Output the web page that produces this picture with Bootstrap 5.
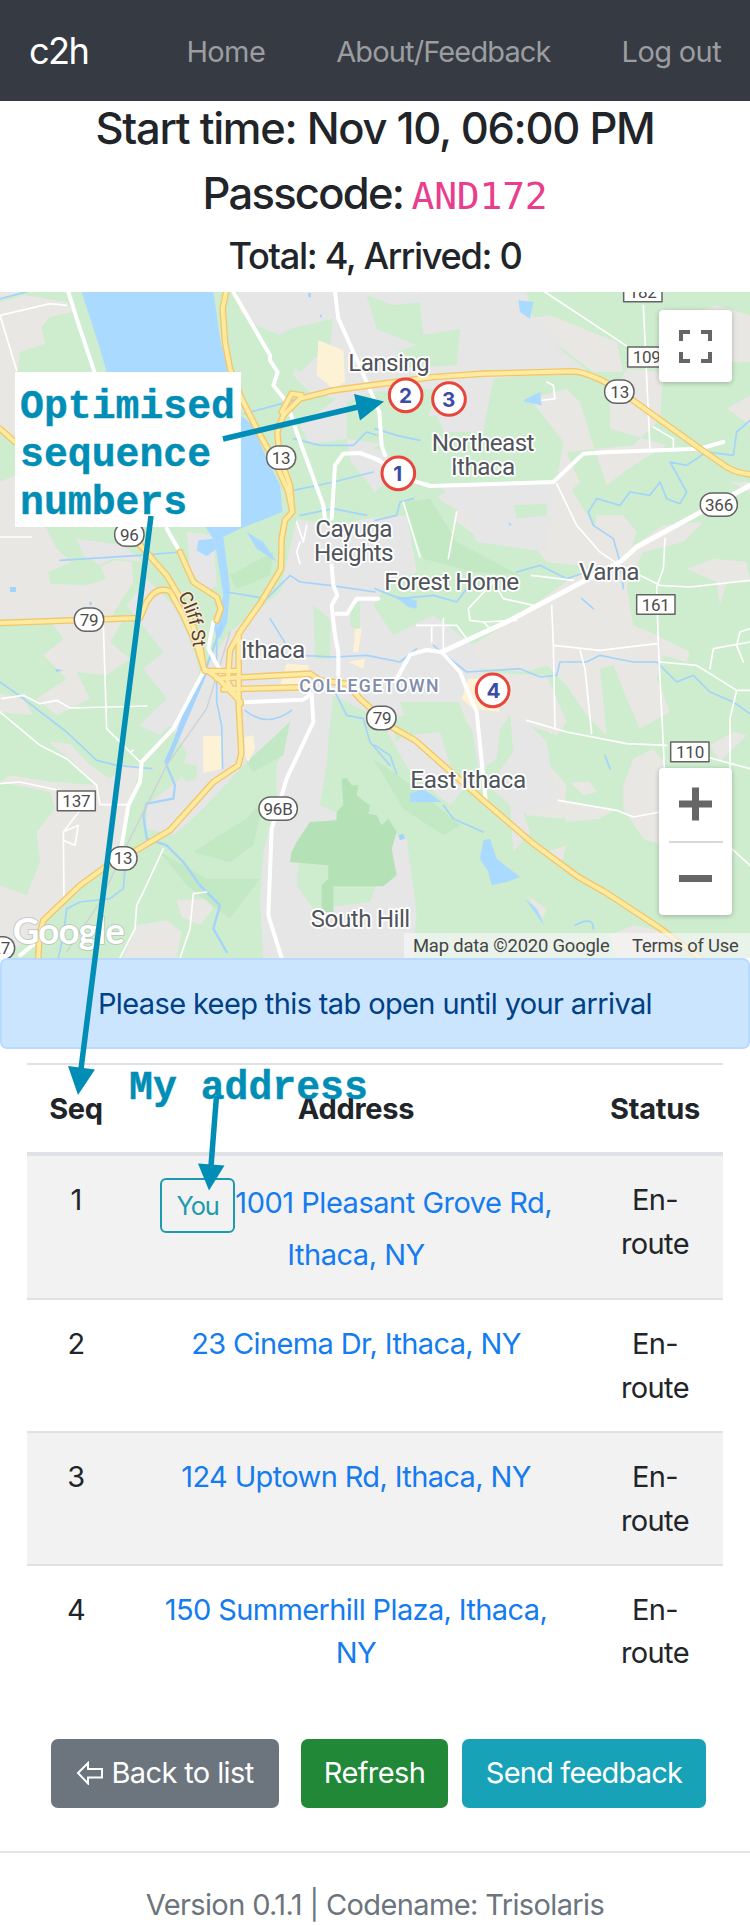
<!DOCTYPE html>
<html lang="en">
<head>
<meta charset="utf-8">
<meta name="viewport" content="width=device-width, initial-scale=1">
<title>c2h</title>
<link href="https://cdn.jsdelivr.net/npm/bootstrap@5.3.0/dist/css/bootstrap.min.css" rel="stylesheet">
<style>
html{font-size:29px}
body{font-family:Inter,"Noto Sans",sans-serif;font-size:29px;line-height:1.5;letter-spacing:-.0215em;color:#212529;background:#fff;width:750px;height:1925px;overflow:hidden}
.topbar{background:#363a42;height:101px;padding:2px 29px 0}
.topbar a{color:#9b9da0;text-decoration:none}
.topbar .logo{color:#fff;font-size:36.2px;letter-spacing:-.045em}
.nav-links{gap:71px}
.trip-head{height:191px;padding-top:1px}
.trip-head h4{font-size:43.5px;line-height:52.2px;margin-bottom:13px;letter-spacing:-.0295em;font-weight:500}
.trip-head h4.pass{letter-spacing:-.04em;margin-bottom:16px}
.trip-head h5{font-size:36.2px;line-height:43.5px;margin-bottom:0;letter-spacing:-.037em;font-weight:500}
.trip-head code{font-family:"DejaVu Sans Mono",monospace;font-size:38px;line-height:1;color:#e83e8c;letter-spacing:-.006em;margin-left:-1.5px}
.map-box{height:666px;overflow:hidden}
.map-box svg{display:block}
.map-btn{background:#fff;border-radius:4px;box-shadow:0 1px 5px rgba(0,0,0,.25);width:73px}
.map-fs{top:18px;right:18px;height:72px}
.map-zoom{top:476px;right:18px;height:147px}
.map-zoom hr{width:54px;margin:0;border-top:2px solid #d9d9d9;opacity:1}
.map-legal{font:18.4px Roboto,sans-serif;letter-spacing:-.01em;color:#444;height:25px;right:0;bottom:0;background:rgba(245,245,245,.72)}
.notice{background:#cce5ff;border:2px solid #b8daff;color:#004085;border-radius:7px;height:91px;padding:0;margin:0 0 14px}
.stops{width:696px;margin:0 auto;table-layout:fixed;text-align:center}
.stops th,.stops td{padding:22px 21.7px 21.7px;border:0;border-top:2px solid #dee2e6;vertical-align:top}
.stops th{height:89px;letter-spacing:-.01em;border-bottom:4px solid #dee2e6}
.stops tbody tr:first-child td{border-top:0}
.stops tbody tr:nth-child(odd) td{background:#f2f2f2}
.stops a{color:#147cf0;text-decoration:none}
.stops .you{color:#1d9bae;border:2px solid #1d9bae;border-radius:6px;font-size:25.4px;line-height:1.5;padding:6.5px 14.5px;letter-spacing:-.04em}
.stops .you + a{letter-spacing:-.0165em}
.actions{padding:42px 44px 0 51px}
.actions .btn{border:2px solid transparent;border-radius:7px;height:69px;padding:0 23px;font-size:29px;color:#fff;display:flex;align-items:center;white-space:nowrap;justify-content:center}
.b-back{background:#6c757d;width:228px}.b-ref{background:#218838;width:147px;margin-left:22px}.b-send{background:#17a2b8;width:244px;margin-left:14px}
.foot{margin-top:43px;border-top:2px solid #e5e5e5;padding-top:30px;color:#6c757d}
.note{font:bold 39.8px/48px "Liberation Mono",monospace;color:#008eb6;letter-spacing:0;-webkit-text-stroke:.4px #008eb6;white-space:pre}
.note-box{left:15px;top:372px;width:226px;height:155px;padding:12px 0 0 5px;background:#fff}
.note-addr{left:129px;top:1065px}
.arrows{left:0;top:0;pointer-events:none}
.lbl text{font-family:Roboto,sans-serif;font-size:73px;fill:#51555b;stroke:#fff;stroke-width:11px;stroke-linejoin:round;paint-order:stroke}
.shield text{font-family:Roboto,sans-serif;font-size:51px;fill:#4c4c4c;text-anchor:middle}
.pin text{font-family:Inter,sans-serif;font-weight:700;font-size:62px;fill:#3c4ba6;text-anchor:middle}
</style>
<script src="https://cdn.jsdelivr.net/npm/bootstrap@5.3.0/dist/js/bootstrap.bundle.min.js"></script>
</head>
<body class="position-relative">
<nav class="topbar d-flex align-items-center justify-content-between">
  <a class="logo" href="#">c2h</a>
  <div class="nav-links d-flex"><a href="#">Home</a><a href="#" style="letter-spacing:-.03em">About/Feedback</a><a href="#">Log out</a></div>
</nav>

<header class="trip-head text-center">
  <h4>Start time: Nov 10, 06:00 PM</h4>
  <h4 class="pass">Passcode: <code>AND172</code></h4>
  <h5>Total: 4, Arrived: 0</h5>
</header>

<section class="map-box position-relative">
<svg width="750" height="666" viewBox="0 20 2250 1998" fill="none" stroke-linejoin="round" stroke-linecap="round">
  <rect y="20" width="2250" height="1998" fill="#ceecce"/>
  <!-- rural land -->
  <g fill="#e9e7e3">
    <path d="M0 50L75 30 200 50 218 80 150 95 125 125 135 175 60 200 50 290 0 290zM0 20H60L0 40z"/>
    <path d="M0 120L45 260V470L0 430zM0 590L45 570 140 730 170 790 215 830 145 860 150 895 260 900 320 880 300 845 345 825 395 830 400 890 330 1000 0 1000z"/>
    <path d="M150 1005H370L330 1070 390 1120 320 1170 230 1160 270 1240 170 1290 110 1240 200 1180 130 1110 190 1060z"/>
    <path d="M0 1225L70 1240 100 1290 0 1280zM145 1370L210 1375 270 1440 330 1480 370 1440 420 1440 360 1700 320 1740 240 1800 130 1905 90 1960 0 2018V1800L80 1830 120 1730 110 1640 165 1570 150 1520 0 1490 30 1470 160 1490 290 1500 210 1420z"/>
    <path d="M530 1845L620 1840 640 1870 600 1920 545 1895zM370 2018L410 1920 500 1905 545 1940 530 2018z"/>
    <path d="M1590 340L1700 310 1740 350 1780 480 1820 600 1900 540 2000 480 1830 430 1830 340 1880 250 1990 260 1980 400 1900 480 1700 500 1740 590 1710 620 1670 590 1690 470z"/>
    <path d="M1570 100L1650 90 1850 170 1870 260 1780 260zM1980 70L2090 80 2150 60 2250 90V230L2180 230 2080 210 2040 120zM2180 370L2250 330V420zM2190 590L2250 590V620z"/>
    <path d="M1400 610L1700 590 1830 800 1820 850 1640 830 1600 780 1450 770 1360 700zM1790 690L1870 690 1910 740 1890 800 1850 860 1780 760z"/>
    <path d="M1740 860L1860 810 1990 720 2110 710 2050 770 1930 800 1880 900 1900 1020 1970 1050 2070 1100 2060 1130 1990 1110 1970 1180 2010 1280 1920 1330 1880 1240 1840 1140 1800 1150 1820 1350 1760 1290 1700 1200 1640 1140 1580 1160 1450 1150 1360 1110 1500 1030z"/>
    <path d="M2060 850L2140 820 2240 830 2250 890 2180 890 2160 960 2150 890zM1320 1110L1400 1160 1640 1170 1700 1310 1670 1350 1560 1310 1640 1430 1700 1500 1690 1600 1580 1590 1400 1310zM1710 1490L1770 1490 1790 1520 1750 1530zM1670 1540L1840 1575 1800 1600 1700 1610zM1900 1420L1960 1390 1990 1430 1985 1680 1930 1660 1870 1570 1870 1500zM2130 1380L2200 1340 2240 1350 2160 1430zM1640 1700L1700 1680 1680 1750zM1580 1830L1640 1870 1630 1900zM1830 1950L1900 1920 2000 1940 2040 2018H1850z"/>
  </g>
  <!-- built-up land -->
  <g fill="#e6e6e7">
    <path d="M715 20H1580L1600 100 1690 200 1760 255 1480 280 1450 440 1320 440 1280 400 1320 310 1120 320 1040 350 1040 460 1170 480 1160 590 1125 620 1030 500 960 590 930 480 900 420 1010 340 930 320 880 270 900 170 840 150 770 120 720 80z"/>
    <path d="M1200 600L1640 600 1660 640 1640 800 1430 770 1400 690 1330 650 1290 610z"/>
    <path d="M890 700L990 720 1100 700 1220 690 1250 860 1160 900 1120 960 1180 1050 1300 990 1420 1080 1460 1200 1380 1250 1200 1250 1230 1350 1320 1340 1350 1440 1400 1500 1350 1560 1230 1460 1140 1300 1000 1230 990 1320 980 1440 960 1560 1030 1590 920 1640 900 1700 890 1800 940 1870 1110 1850 1130 1800 1180 1640 1220 1660 1250 1880 1240 2018H790L780 1850 790 1700 830 1540 830 1440 870 1310 810 1370 730 1440 600 1580 520 1650 440 1630 440 1560 540 1480 560 1400 500 1300 600 1170 690 1040 840 920z"/>
    <path d="M560 740L640 750 650 900 620 920 570 850zM230 760L370 780 430 830 340 820 300 840 250 810zM380 960L440 880 520 960 560 1040 600 1150 560 1270 480 1350 420 1320 500 1240 430 1150 490 1100z"/>
    <path d="M1410 1300L1580 1310 1640 1370 1670 1560 1570 1580 1590 1640 1540 1700 1530 1560 1440 1480z"/>
  </g>
  <!-- green patches over town -->
  <g fill="#ceecce">
    <path d="M1100 30L1180 60 1260 50 1270 150 1380 130 1370 240 1200 250 1190 200 1250 180 1130 130zM870 130L1000 100 990 180 900 260 830 220 790 180zM900 480L1040 460 1050 520 1040 700 1240 560 1340 620 1200 680 1000 720 950 700z"/>
    <path d="M1250 400L1310 390 1340 460 1180 510 1120 490zM1540 660L1640 655 1640 690 1550 700zM690 840L840 840 800 920 700 920zM720 740L830 700 820 850 720 830zM940 960L990 1000 990 1120 945 1120zM1050 960L1080 950 1080 1040 1050 1020z"/>
    <path d="M1500 1330L1530 1290 1540 1400 1460 1510 1450 1450 1490 1420zM1170 1300L1370 1250 1360 1280 1240 1320 1190 1370z"/>
    <path d="M500 1430L590 1440 590 1480 560 1490z"/>
  </g>
  <g fill="#c3e8c4"><path d="M690 870L820 800 810 870 710 910zM1210 650L1290 640 1370 770 1560 870 1420 860 1270 820zM870 1310L850 1410 760 1460 740 1430zM1120 1420L1250 1510 1380 1620 1330 1650 1210 1570zM480 1700L620 1780 780 1780 690 1900 560 1800zM740 1600L790 1540 760 1680 690 1730 580 1700z"/></g>
  <path fill="#b4e1b5" d="M1025 1480L1040 1478 1055 1500 1075 1500 1070 1530 1095 1550 1110 1560 1105 1585 1130 1590 1145 1620 1165 1600 1190 1640 1175 1690 1190 1770 1150 1803H1000V1880H965V1800L985 1780 985 1740 870 1730 875 1700 890 1670 930 1610 1010 1605 1010 1580 1030 1560zM1125 1655L1160 1670 1145 1700 1175 1700V1770H1100z"/>
  <!-- commercial blocks -->
  <path fill="#fdf2d6" d="M955 165L1030 195 1035 290 1000 310 950 270zM610 1352H665V1450L610 1463zM735 1355L760 1350 765 1390 745 1430 733 1410zM860 1135L925 1140 930 1230 840 1200zM1065 1030H1085L1075 1100H1060zM1045 1130L1095 1120 1090 1150zM1405 1180H1460L1500 1280 1420 1270 1385 1240z"/>
  <!-- water -->
  <g fill="#aadaff">
    <path d="M245 20H640L662 170 690 270 720 345V390L760 420 800 520 840 600 847 680 720 730 670 755 690 910 682 1010 660 1060 640 1030 670 930 645 770 620 730 560 600 320 260 300 190z"/>
    <path d="M595 765L640 760 650 790 620 813 590 795zM1555 45L1600 50 1590 100 1560 80zM1570 345L1620 320 1625 360 1575 350zM1180 930L1250 945 1250 970 1225 965zM1230 1525L1270 1510 1325 1550 1230 1550zM1450 1665L1470 1660 1490 1720 1560 1775 1520 1790 1475 1800 1465 1760 1440 1720zM1575 1840L1610 1870 1635 1925zM740 740L790 770 830 830 770 790z"/>
  </g>
  <g stroke="#a4d4fb" stroke-width="5">
    <path d="M665 1020L610 1170 550 1290 500 1440 525 1500 520 1540 440 1555 430 1590 440 1660 500 1680 550 1730 600 1800 660 1860 640 1930 680 2000" stroke-width="7"/>
    <path d="M500 1430L620 1150" stroke-width="14"/><path d="M650 1030L650 1250 665 1320 668 1450M735 1275Q800 1330 875 1275M0 1190L70 1240 200 1340 290 1425 350 1440 455 1450M375 1750L370 1810 330 1840 240 1850 200 1870 190 1950 175 2018M680 920L800 940 870 870 900 890 990 900 1125 920M810 1000L860 1080M180 825L420 810 540 800M735 385L900 340M880 460L960 480 1060 480 1100 440 1130 450M880 615L1000 590 1120 560M900 690L1000 670 1100 690M900 1110L1000 1115 1100 1110 1200 1130 1250 1090M1000 1210L1040 1290 1090 1300 1110 1370 1170 1440M1125 705L1190 690 1200 650 1240 640M1125 430L1190 450 1260 465M1125 910L1200 940 1300 930 1370 950 1400 910M1550 860L1620 840 1700 880 1760 860M1300 1080L1400 1160 1560 1150 1620 1175 1670 1170 1680 1130 1760 1130 1800 1110 1900 1130 1970 1130 2030 1190 2080 1170 2130 1220 2200 1250 2250 1285M1870 910L1860 830 1840 760 1780 720 1765 680 1790 640 1860 660 1890 620 1950 630 1980 590 2000 640 2040 655 2060 620 2010 530 2060 540 2120 500 2200 510 2210 440 2250 405M1330 1560L1360 1600 1450 1640M1125 1380L1170 1410 1190 1465M1745 940L1780 970M1815 1410L1830 1450M1725 1920Q1780 1890 1780 1930M0 40L80 20"/>
  </g>
  <g fill="#a4d4fb"><path d="M30 905H48V920H30zM165 1150L190 1155 170 1160zM268 950H275V960H268zM1195 1650L1210 1645 1215 1660 1200 1665zM1525 710L1535 718 1528 722zM960 88H966V96H960zM925 22H933V36H925z"/></g>
  <path stroke="#d0d0d2" stroke-width="4" d="M690 1040L620 1270 500 1440 430 1580 370 1700 300 1850 200 2000"/>
  <!-- minor roads -->
  <g stroke="#fff" stroke-width="5">
    <path d="M0 90L150 55 200 60 M0 90L50 255M0 755H95M310 1020L320 1330 420 1430M5 1240L70 1230 120 1255 170 1245 210 1268 440 1262M0 1280L120 1380 200 1420 290 1500 300 1558H385M0 1495L60 1490 200 1520M240 1575L190 1640 192 1840M190 1640L235 1620 225 1680 190 1665M420 1430L390 1400 400 1395M490 1690L430 1820 410 1860 405 1930 360 2018M620 1820L580 1825 570 1930 540 2018"/>
    <path d="M1635 20L1900 195M1930 60L1950 490M1640 290L1660 300 1665 340 1625 345M1960 425L2020 460V490M1670 595L1730 720 1800 800 1860 840 1980 900 2070 905 2250 885M1995 760L1990 850 1970 905 1975 1080 1990 1380 1993 1450M1655 960L1660 1080 1665 1330M1740 1095L1755 1150 1775 1345M1580 1305L1700 1340 1880 1375 2000 1380M2120 1415L2250 1450M1660 1080L1800 1095 1970 1075M1980 1130L2090 1140 2210 1215 2250 1215M2210 1215L2190 1300 2190 1450M2250 1070L2140 1090 2130 1150M1675 1545L1850 1575 1900 1595 1980 1580M2195 1690L2250 1740M1370 680L1345 820M1210 650L1260 815M1410 1005L1405 970 1480 890M1410 1005L1450 1010 1550 1005M1250 1020H1370L1400 1060M1295 1020V1070M1330 1000V1100M1450 1010L1470 1030M2250 1030L2220 1040 2210 1080 2230 1130M1480 890L1510 940 1600 960M1595 870L1720 885M890 710L910 770 920 720M900 770L890 800 900 835"/>
  </g>
  <!-- streets -->
  <g stroke="#fff" stroke-width="12">
    <path d="M205 20L230 100 285 265M610 1160L520 1330 425 1430 420 1490 385 1560 365 1680M500 730L540 800M640 1010L625 1090 658 1150V1175M730 1251L910 1243 935 1225 940 1310 860 1480 815 1630 805 1890 845 2018M700 20L810 210V225L833 260 820 300 860 350 890 440 970 660 975 700M1005 20L1015 100 1060 200 1100 290 1138 380 1145 480 1155 510M1125 520L1170 545 1220 580 1290 602 1660 590 1750 505 1830 500 2100 490 2170 470"/>
    <path d="M995 700L1005 540 1030 505 1080 503 1140 525M995 840L1000 900 1012 930 995 960 1005 1050 1015 1100V1170M1010 985H1042L1070 940 1135 940M1190 1180L1230 1108 1280 1094 1325 1100 1380 1160 1400 1210 1430 1280 1457 1545M60 2010L110 1970"/>
    <path d="M1325 1100L1520 1010 1860 830 1910 785 2250 600" stroke-width="15"/>
  </g>
  <!-- highways: casing, then fill -->
  <defs><path id="hw" d="M678 20L668 70 675 170 690 250 725 340 770 430 830 540 865 620 877 680 855 705 845 760 843 850 780 955 720 1040 690 1095 683 1190 722 1255M716 1045V1255L724 1405 715 1440 640 1490 510 1635 400 1700 330 1735 240 1800 130 1905 118 1950 115 2018M877 680L870 600 838 510 832 440 850 390 900 340 1000 315 1125 298 1300 275 1450 265 1720 258Q1770 262 1850 310L2100 490 2180 545Q2210 563 2250 567M845 380L875 325 905 330 M0 1013L270 1003 420 998 440 950Q470 900 510 918L550 990 590 1080 612 1150 650 1175 722 1250M0 430L45 470M350 700L430 790 500 870 560 970 600 1080 612 1150M540 800L580 890 650 935 662 970 650 1005M615 1157H715M650 1180L930 1165 960 1185 1040 1195 1080 1240 1175 1325 1245 1365 1455 1550 1600 1675 1735 1775 1815 1820 1975 1925 2100 2018M670 1212L900 1206"/></defs>
  <use href="#hw" stroke="#f2c66c" stroke-width="20"/>
  <use href="#hw" stroke="#feeb9f" stroke-width="12"/>

  <g class="shield" fill="#fff" stroke="#646464" stroke-width="4.5">
    <rect x="800" y="482" width="87" height="70" rx="34"/><rect x="344" y="713" width="88" height="70" rx="34"/><rect x="223" y="968" width="88" height="70" rx="34"/><rect x="327" y="1684" width="84" height="70" rx="34"/><rect x="777" y="1535" width="115" height="70" rx="34"/><rect x="1100" y="1263" width="88" height="70" rx="34"/><rect x="1814" y="284" width="88" height="70" rx="34"/><rect x="2101" y="623" width="111" height="70" rx="34"/><rect x="-60" y="1954" width="104" height="68" rx="34"/>
    <rect x="1871" y="-15" width="115" height="64"/><rect x="1883" y="185" width="115" height="60"/><rect x="1910" y="928" width="115" height="59"/><rect x="2012" y="1370" width="115" height="59"/><rect x="172" y="1517" width="114" height="59"/>
    <g stroke="none"><text x="843" y="535">13</text><text x="388" y="766">96</text><text x="267" y="1021">79</text><text x="369" y="1737">13</text><text x="834" y="1589">96B</text><text x="1146" y="1316">79</text><text x="1859" y="337">13</text><text x="2157" y="677">366</text><text x="2" y="2007">27</text><text x="1928" y="39">182</text><text x="1940" y="233">109</text><text x="1967" y="976">161</text><text x="2070" y="1417">110</text><text x="229" y="1564">137</text></g>
  </g>
  <g class="lbl">
    <text x="1045" y="258" textLength="243">Lansing</text><text x="1295" y="497" textLength="308">Northeast</text><text x="1353" y="569" textLength="192">Ithaca</text>
    <text x="946" y="755" textLength="231">Cayuga</text><text x="942" y="826" textLength="238">Heights</text><text x="1153" y="913" textLength="404">Forest Home</text><text x="1737" y="883" textLength="181">Varna</text>
    <text x="722" y="1119" textLength="193">Ithaca</text><text x="1231" y="1507" textLength="347">East Ithaca</text><text x="932" y="1924" textLength="298">South Hill</text>
    <text x="898" y="1221" textLength="417" style="font-size:53px;font-weight:500;fill:#808cab">COLLEGETOWN</text>
    <path id="cliff" d="M533 932Q573 994 580 1095"/>
    <text style="font-size:56px;fill:#5b3d22;stroke:#f6efdc;stroke-width:8px"><textPath href="#cliff" textLength="162">Cliff St</textPath></text>
    <text x="38" y="1977" textLength="336" style="font-family:Lato,sans-serif;font-size:110px;font-weight:700;fill:#fff;stroke:#a9aeb0;stroke-opacity:.55;stroke-width:6px">Google</text>
  </g>
  <g class="pin" fill="#fff" stroke="#e8453c" stroke-width="9">
    <circle cx="1217" cy="330" r="49"/><circle cx="1347" cy="341" r="49"/><circle cx="1195" cy="564" r="49"/><circle cx="1478" cy="1215" r="49"/>
    <g stroke="none"><text x="1216" y="352">2</text><text x="1346" y="364">3</text><text x="1193" y="586">1</text><text x="1480" y="1237">4</text></g>
  </g>
</svg>
<div class="map-btn map-fs position-absolute d-flex align-items-center justify-content-center">
  <svg width="33" height="33" fill="none" stroke="#666" stroke-width="4"><path d="M2 11V2H11M22 2H31V11M31 22V31H22M11 31H2V22"/></svg>
</div>
<div class="map-btn map-zoom position-absolute d-flex flex-column align-items-center justify-content-between">
  <svg width="73" height="72" fill="#666"><path d="M20 32.500H33V19.500H40V32.500H53V39.500H40V52.500H33V39.500H20z"/></svg><hr><svg width="73" height="72" fill="#666"><path d="M20 32H53V39H20z"/></svg>
</div>
<div class="map-legal position-absolute d-flex align-items-center" style="width:346px"><span style="width:219px;padding-left:9px">Map data ©2020 Google</span><span style="padding-left:9px">Terms of Use</span></div>
</section>

<div class="notice alert d-flex align-items-center justify-content-center">Please keep this tab open until your arrival</div>

<table class="stops">
  <colgroup><col style="width:98px"><col style="width:462px"><col style="width:136px"></colgroup>
  <thead><tr><th>Seq</th><th>Address</th><th>Status</th></tr></thead>
  <tbody>
    <tr><td>1</td><td><span class="you btn">You</span><a href="#">1001 Pleasant Grove Rd, Ithaca, NY</a></td><td>En-route</td></tr>
    <tr><td>2</td><td><a href="#">23 Cinema Dr, Ithaca, NY</a></td><td>En-route</td></tr>
    <tr><td>3</td><td><a href="#">124 Uptown Rd, Ithaca, NY</a></td><td>En-route</td></tr>
    <tr><td>4</td><td><a href="#">150 Summerhill Plaza, Ithaca, NY</a></td><td>En-route</td></tr>
  </tbody>
</table>

<div class="actions d-flex">
  <a class="btn b-back" href="#"><svg width="27" height="24" fill="none" stroke="#fff" stroke-width="2" style="margin-right:8px"><path d="M2 12L12 2V8H26V16.500H12V22.500z"/></svg>Back to list</a>
  <a class="btn b-ref" href="#">Refresh</a>
  <a class="btn b-send" href="#" style="letter-spacing:-.028em">Send feedback</a>
</div>
<footer class="foot text-center">Version 0.1.1 | Codename: Trisolaris</footer>

<!-- annotations -->
<div class="note note-box position-absolute">Optimised
sequence
numbers</div>
<div class="note note-addr position-absolute">My address</div>
<svg class="arrows position-absolute" width="750" height="1925" stroke="#008eb6" stroke-width="5.500" fill="#008eb6">
  <path d="M223 439L358 407M151 516L81 1069M216.500 1096L211 1166" fill="none"/>
  <path stroke="none" d="M354 394L360 420.500 384 401.500zM68 1066L95 1069.500 78 1095zM198 1163.500L224.500 1165.500 209 1190.500z"/>
</svg>
</body>
</html>
